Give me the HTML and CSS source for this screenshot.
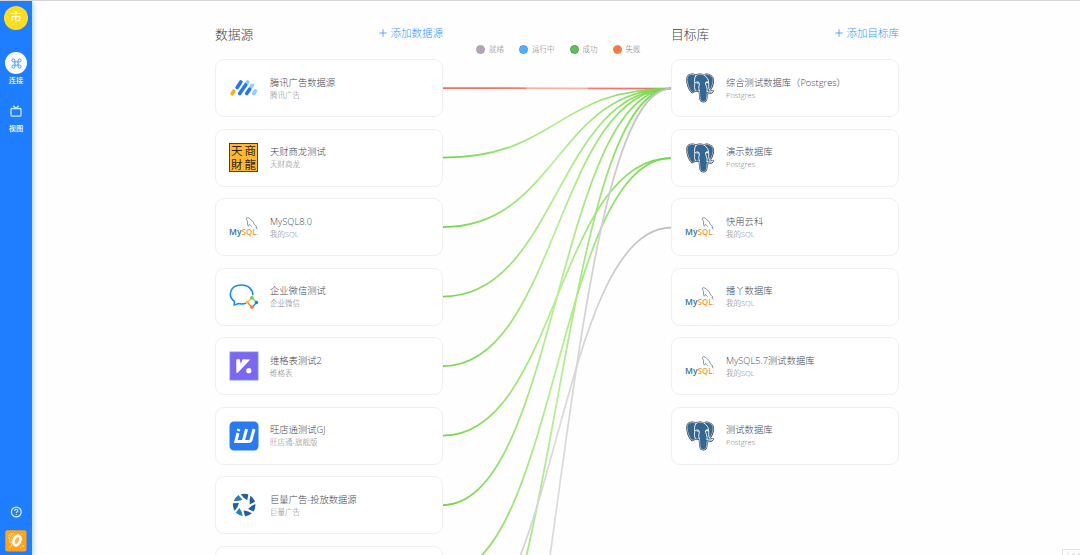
FILE: index.html
```html
<!DOCTYPE html>
<html>
<head>
<meta charset="utf-8">
<title>数据连接</title>
<link rel="stylesheet" href="styles.css">
</head>
<body>
<svg class="defs" width="0" height="0">
  <symbol id="postgres" viewBox="0 0 84 90">
    <g stroke-linejoin="round" stroke-linecap="round">
      <path d="M30 7C16 0 3 5 3 20C4 34 10 50 17 57C21 60 25 56 28 52C30 55 35 55 40 53C42 62 40 75 44 82C48 88 58 87 61 80C63 72 62 66 63 61C70 62 78 60 81 54C78 54 73 54 71 52C78 42 83 26 81 17C76 4 63 2 54 6C46 3 37 3 30 7Z" fill="#336791" stroke="#2b2430" stroke-width="5"/>
      <path d="M30 7C16 0 3 5 3 20C4 34 10 50 17 57C21 60 25 56 28 52C30 55 35 55 40 53C42 62 40 75 44 82C48 88 58 87 61 80C63 72 62 66 63 61C70 62 78 60 81 54C78 54 73 54 71 52C78 42 83 26 81 17C76 4 63 2 54 6C46 3 37 3 30 7Z" fill="#336791" stroke="#e6e8ee" stroke-width="2"/>
      <path d="M30 7C24 14 26 24 26 32C26 42 24 46 28 52M28 29C32 25 39 26 40 31C41 38 35 43 40 53M54 6C63 12 68 20 68 29C69 38 66 45 71 52M67 27C61 24 57 28 59 34C62 43 65 47 63 56" fill="none" stroke="#eef1f5" stroke-width="3"/>
      <path d="M33 30h5M61 29h4" stroke="#fff" stroke-width="3.4"/>
      <path d="M64 56C70 58 75 57 79 55" fill="none" stroke="#fff" stroke-width="3"/>
    </g>
  </symbol>
  <symbol id="mysql" viewBox="0 0 30 24">
    <path d="M17.300 3.300C18.200 2.200 20 2.800 21.200 4C23.400 5.600 24.500 7.200 25.200 9.200C25.700 10.500 27 11.200 28 12.300L26.800 12.700L28.600 14M17.300 3.300C17 4.500 18.300 5.300 18.500 6.700C18.600 8.300 18.300 10 19.300 11.200C20 11 19.900 9.800 20.300 9.400C21.200 9.800 21.600 11 22.700 11.700" fill="none" stroke="#7089aa" stroke-width=".9"/>
    <text x="0" y="20" class="mysql-my" textLength="12.500" lengthAdjust="spacingAndGlyphs">My</text>
    <text x="12.800" y="20" class="mysql-sql" textLength="14.600" lengthAdjust="spacingAndGlyphs">SQL</text>
    <circle cx="28.300" cy="19.600" r=".5" fill="#e9a052"/>
  </symbol>
</svg>

<div class="app">
  <nav class="sidebar">
    <div class="avatar">市</div>
    <div class="nav-item">
      <span class="nav-icon active">
        <svg width="11" height="11" viewBox="0 0 11 11" fill="none" stroke="#3e97ff" stroke-width=".95"><path d="M3.900 3.900V2.400A1.500 1.500 0 1 0 2.400 3.900H8.600A1.500 1.500 0 1 0 7.100 2.400V8.600A1.500 1.500 0 1 0 8.600 7.100H2.400A1.500 1.500 0 1 0 3.900 8.600Z"/></svg>
      </span>
      <span class="nav-label">连接</span>
    </div>
    <div class="nav-item">
      <span class="nav-icon">
        <svg width="12" height="12" viewBox="0 0 12 12" fill="none" stroke="#c5ecff" stroke-width="1.300"><rect x="1" y="3.500" width="10" height="7.600" rx="1"/><path d="M3.300 .7L6 3.400L8.700 .7"/></svg>
      </span>
      <span class="nav-label">视图</span>
    </div>
    <div class="nav-bottom">
      <svg width="12" height="12" viewBox="0 0 12 12" fill="none" stroke="#d8ecff"><circle cx="6.300" cy="6" r="4.900" stroke-width="1.300"/><path d="M4.700 4.900C4.700 2.700 7.900 2.800 7.900 4.700C7.900 5.900 6.300 5.800 6.300 7.100M6.300 8v1.100" stroke-width="1.200"/></svg>
      <svg width="22" height="22" viewBox="0 0 22 22"><rect x=".3" y=".3" width="21.200" height="21.300" rx="2" fill="#ffa31a"/><g fill="none" stroke="#ffe6c0" stroke-width=".9" stroke-dasharray="2 .8"><path d="M4 9C3 5 5 3 7 4M5 13C3 9 6 4 9 3M7 16C5 12 6 7 10 4"/></g><ellipse cx="12" cy="10.500" rx="3.200" ry="5" transform="rotate(24 12 10.500)" fill="#ffb34b" stroke="#fff" stroke-width="2.800"/><g fill="#ffe9cc"><circle cx="17" cy="4" r=".7"/><circle cx="18" cy="16" r=".8"/><circle cx="5" cy="17" r=".7"/><circle cx="15.500" cy="17.500" r=".6"/></g></svg>
    </div>
  </nav>

  <main class="board">
    <section class="column">
      <header class="column-head"><h2>数据源</h2><a class="add"><svg width="8" height="8" viewBox="0 0 8 8"><path d="M4 .3v7.400M.3 4h7.400" stroke="#4a9dff" stroke-width=".9"/></svg>添加数据源</a></header>
      <article class="card">
        <svg class="logo" viewBox="0 0 30 30" fill="none" stroke-width="3.600" stroke-linecap="round"><path d="M3.200 20.800L4.700 18.200" stroke="#ffac13"/><path d="M17.300 11L18.700 9" stroke="#8fc7ff"/><path d="M21.500 15.100L23.400 12.300M24.800 20.600L26.500 18" stroke="#93cbff"/><path d="M8.200 14.400L11.800 9M10.700 20.600L16.600 12M17.700 20.600L20.600 16.300" stroke="#2674ee"/></svg>
        <div class="card-text"><h3>腾讯广告数据源</h3><p>腾讯广告</p></div>
      </article>
      <article class="card">
        <div class="logo seal"><span>天</span><span>商</span><span>財</span><span>龍</span></div>
        <div class="card-text"><h3>天财商龙测试</h3><p>天财商龙</p></div>
      </article>
      <article class="card">
        <svg class="logo mysql"><use href="#mysql"/></svg>
        <div class="card-text"><h3>MySQL8.0</h3><p>我的SQL</p></div>
      </article>
      <article class="card">
        <svg class="logo" viewBox="0 0 30 30"><path d="M17 21.200C14.500 22 12 22.100 9.700 21.500L5.200 22.900L5.500 19.400C-1.500 14.500 .5 3.200 12.200 3.100C19.700 3.100 24 7.800 23.800 13.200" fill="none" stroke="#1688f0" stroke-width="1.500"/><g fill="none" stroke-width="1.200" stroke-linecap="round"><path d="M20 18.500L22.500 16.300" stroke="#ffb629"/><path d="M23.500 16L26.500 19.300" stroke="#68cc45"/><path d="M27 21L24 24.500" stroke="#1688f0"/><path d="M22.300 24.500L19 21" stroke="#f57b34"/></g><circle cx="22.800" cy="15.700" r="1.700" fill="#62ce4c"/><circle cx="27.500" cy="20.500" r="1.700" fill="#127bef"/><circle cx="23" cy="25.200" r="1.700" fill="#f47b35"/><circle cx="18.500" cy="20.100" r="1.700" fill="#ffb525"/></svg>
        <div class="card-text"><h3>企业微信测试</h3><p>企业微信</p></div>
      </article>
      <article class="card">
        <svg class="logo" viewBox="0 0 30 30"><rect x=".8" y=".8" width="28.400" height="28.400" fill="#7b68ee" stroke="#9ac2fb" stroke-width=".7"/><path d="M8.200 8.200Q7.300 8.200 7.300 9.200V21.300Q8 22.600 9 21.600L21.300 8.400L13.600 8.200L11.800 13L10.800 8.200Z" fill="#fff"/><circle cx="19.800" cy="19.700" r="2.600" fill="#fff"/></svg>
        <div class="card-text"><h3>维格表测试2</h3><p>维格表</p></div>
      </article>
      <article class="card">
        <svg class="logo" viewBox="0 0 30 30"><rect x=".5" y=".5" width="29" height="29" rx="4.500" fill="#277bee"/><g fill="none" stroke="#fff" stroke-width="3"><path d="M9 12L6.800 20.400H20.300Q21.600 20.400 22 19L25 8.200M17.600 8.200L14.200 20.400"/><path d="M9.900 8L9.300 10.200"/></g></svg>
        <div class="card-text"><h3>旺店通测试GJ</h3><p>旺店通-旗舰版</p></div>
      </article>
      <article class="card">
        <svg class="logo" viewBox="0 0 30 30"><defs><path id="blade" d="M11.800 4.300Q15.500 3.300 19.400 4.300L18.300 10.300Q14.500 8.500 11.800 4.300Z"/></defs><g fill="#235f9e"><use href="#blade"/><use href="#blade" transform="rotate(51.400 15.200 15)"/><use href="#blade" transform="rotate(102.800 15.200 15)"/><use href="#blade" transform="rotate(154.200 15.200 15)"/><use href="#blade" transform="rotate(205.600 15.200 15)" fill="#287fbd"/><use href="#blade" transform="rotate(257 15.200 15)"/><use href="#blade" transform="rotate(308.400 15.200 15)" fill="#287fbd"/></g></svg>
        <div class="card-text"><h3>巨量广告-投放数据源</h3><p>巨量广告</p></div>
      </article>
      <article class="card"></article>
    </section>

    <section class="links">
      <ul class="legend"><li class="ready">就绪</li><li class="running">运行中</li><li class="success">成功</li><li class="failed">失败</li></ul>
      <svg class="link-lines" width="228" height="496" viewBox="0 59 228 496" fill="none" stroke-width="1.750">
        <defs>
          <linearGradient id="green" gradientUnits="userSpaceOnUse" x1="0" y1="0" x2="228" y2="0"><stop offset="0" stop-color="#73d447"/><stop offset=".5" stop-color="#b8ee94"/><stop offset="1" stop-color="#73d447"/></linearGradient>
          <linearGradient id="gray" gradientUnits="userSpaceOnUse" x1="0" y1="0" x2="228" y2="0"><stop offset="0" stop-color="#bdbdbd"/><stop offset=".5" stop-color="#dcdcdc"/><stop offset="1" stop-color="#bdbdbd"/></linearGradient>
          <linearGradient id="red" gradientUnits="userSpaceOnUse" x1="0" y1="0" x2="228" y2="0"><stop offset="0" stop-color="#f26b60"/><stop offset=".36" stop-color="#f47c70"/><stop offset=".37" stop-color="#fbb0a4"/><stop offset=".63" stop-color="#fbb0a4"/><stop offset=".64" stop-color="#f47c70"/><stop offset="1" stop-color="#f26b60"/></linearGradient>
        </defs>
        <path d="M0 88.100C114 88.100 114 88.500 228 88.500" stroke="url(#red)"/>
        <g stroke="url(#green)">
          <path d="M0 157.500C114 157.500 114 88.500 228 88.500"/>
          <path d="M0 227C114 227 114 88.500 228 88.500"/>
          <path d="M0 296.500C114 296.500 114 88.500 228 88.500"/>
          <path d="M0 366C114 366 114 88.500 228 88.500"/>
          <path d="M0 435.500C114 435.500 114 158 228 158"/>
          <path d="M0 505C114 505 114 88.500 228 88.500"/>
          <path d="M0 574.500C114 574.500 114 158 228 158"/>
          <path d="M0 713.500C114 713.500 114 88.500 228 88.500"/>
        </g>
        <g stroke="url(#gray)">
          <path d="M0 644C114 644 114 227.700 228 227.700"/>
          <path d="M0 922C114 922 114 88.500 228 88.500"/>
        </g>
      </svg>
    </section>

    <section class="column">
      <header class="column-head"><h2>目标库</h2><a class="add"><svg width="8" height="8" viewBox="0 0 8 8"><path d="M4 .3v7.400M.3 4h7.400" stroke="#4a9dff" stroke-width=".9"/></svg>添加目标库</a></header>
      <article class="card"><svg class="logo pg"><use href="#postgres"/></svg><div class="card-text"><h3>综合测试数据库（Postgres）</h3><p>Postgres</p></div></article>
      <article class="card"><svg class="logo pg"><use href="#postgres"/></svg><div class="card-text"><h3>演示数据库</h3><p>Postgres</p></div></article>
      <article class="card"><svg class="logo mysql"><use href="#mysql"/></svg><div class="card-text"><h3>快用云科</h3><p>我的SQL</p></div></article>
      <article class="card"><svg class="logo mysql"><use href="#mysql"/></svg><div class="card-text"><h3>播丫数据库</h3><p>我的SQL</p></div></article>
      <article class="card"><svg class="logo mysql"><use href="#mysql"/></svg><div class="card-text"><h3>MySQL5.7测试数据库</h3><p>我的SQL</p></div></article>
      <article class="card"><svg class="logo pg"><use href="#postgres"/></svg><div class="card-text"><h3>测试数据库</h3><p>Postgres</p></div></article>
    </section>
  </main>
  <div class="corner-tip"><i></i><i></i><i></i></div>
</div>
</body>
</html>
```
FILE: styles.css
```css
* { box-sizing: border-box; }
body {
  margin: 0;
  background: #fefefe;
  font-family: "Open Sans", "Noto Sans CJK SC", sans-serif;
  font-weight: 300;
  overflow: hidden;
}
h2, h3, p, ul { margin: 0; padding: 0; font-weight: inherit; }
.defs { position: absolute; }
.app {
  position: relative;
  display: flex;
  height: 555px;
  border-top: 1px solid #d5d5d5;
  overflow: hidden;
}
.sidebar {
  width: 32px;
  flex: none;
  display: flex;
  flex-direction: column;
  align-items: center;
  padding: 5px 0 3px;
  background: #1f7dff;
  box-shadow: 1px 0 5px rgba(31, 125, 255, .4);
}
.avatar {
  width: 24px;
  height: 24px;
  margin-bottom: 22px;
  border-radius: 50%;
  background: #ffdc24;
  color: #fff;
  font-size: 12px;
  font-weight: 400;
  line-height: 24px;
  text-align: center;
}
.nav-item {
  display: flex;
  flex-direction: column;
  align-items: center;
  height: 48px;
}
.nav-icon {
  width: 22px;
  height: 22px;
  border-radius: 50%;
  display: flex;
  align-items: center;
  justify-content: center;
}
.nav-icon.active { background: #fff; }
.nav-label {
  margin-top: 1px;
  color: #fff;
  font-size: 7.200px;
  font-weight: 500;
  line-height: 11px;
}
.nav-bottom {
  display: flex;
  flex-direction: column;
  align-items: center;
  gap: 12px;
  margin-top: auto;
}
.nav-bottom svg { display: block; }
.board {
  display: flex;
  align-items: flex-start;
  padding: 22px 0 0 183px;
}
.column {
  width: 228px;
  flex: none;
  display: flex;
  flex-direction: column;
  gap: 11.500px;
}
.column-head {
  display: flex;
  align-items: center;
  justify-content: space-between;
  height: 20px;
  margin-bottom: 4.500px;
}
.column-head h2 {
  padding-top: 1px;
  color: #3c4250;
  font-size: 12.800px;
  line-height: 20px;
}
.add {
  display: flex;
  align-items: center;
  gap: 3.500px;
  color: #3895ff;
  font-size: 10.500px;
  line-height: 20px;
}
.card {
  height: 58px;
  flex: none;
  display: flex;
  align-items: center;
  gap: 11px;
  padding-left: 13px;
  border: 1px solid #f0f0f0;
  border-radius: 9px;
  background: #fff;
}
.logo { width: 30px; height: 30px; flex: none; }
.logo.mysql { height: 24px; }
.mysql-my, .mysql-sql {
  font: 600 9.500px "Open Sans", sans-serif;
  fill: #397196;
}
.mysql-sql { fill: #f29a3a; }
.seal {
  display: grid;
  grid-template: 13.500px 13.500px / 13.500px 13.500px;
  width: 29px;
  height: 29px;
  margin-right: 1px;
  border: 1px solid #49402c;
  background: #ffb92c;
  color: #351d22;
  font-size: 11.500px;
  font-weight: 400;
  line-height: 13px;
  text-align: center;
}
.card-text h3 {
  color: #434855;
  font-size: 9.300px;
  line-height: 14px;
  white-space: nowrap;
}
.card-text p {
  color: #7f7f7f;
  font-size: 7.500px;
  line-height: 11px;
}
.links {
  width: 228px;
  flex: none;
}
.legend {
  display: flex;
  gap: 15px;
  height: 36px;
  padding: 21px 0 0 33px;
  list-style: none;
  color: #7a7a7a;
  font-size: 7.500px;
  line-height: 11px;
}
.legend li {
  display: flex;
  align-items: center;
  align-self: flex-start;
  gap: 4px;
  white-space: nowrap;
}
.legend li::before {
  content: "";
  width: 7px;
  height: 7px;
  border-radius: 50%;
  border: 1px solid #a99fa8;
  background: #b3a4b7;
}
.legend .running::before { background: #57adf8; border-color: #3f9eee; }
.legend .success::before { background: #69b969; border-color: #4ca64c; }
.legend .failed::before { background: #ef7852; border-color: #f58634; }
.link-lines { display: block; }
.corner-tip {
  position: absolute;
  right: 0;
  bottom: 0;
  display: flex;
  gap: 3px;
  width: 18px;
  height: 6px;
  padding: 3px 0 0 4px;
  border: 1px solid #e4e4e4;
  border-width: 1px 0 0 1px;
}
.corner-tip i { width: 3px; height: 2px; background: #e8e8e8; }
```
